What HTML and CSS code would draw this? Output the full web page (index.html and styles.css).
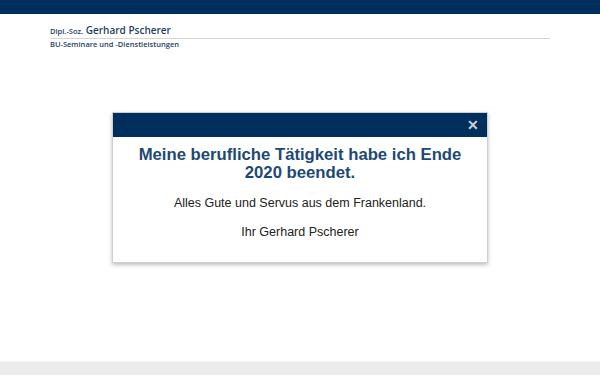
FILE: index.html
```html
<!DOCTYPE html>
<html lang="de">
<head>
  <meta charset="UTF-8"/>
  <meta name="viewport" content="width=device-width,initial-scale=1.0"/>
  <title>Gerhard Pscherer</title>
  <link rel="stylesheet" href="styles.css">
</head>
<body>

<div class="topbar"></div>

<header class="brand">
  <div class="brand-name"><small>Dipl.-Soz.</small> Gerhard Pscherer</div>
  <div class="brand-sub">BU-Seminare und -Dienstleistungen</div>
</header>

<main></main>

<footer></footer>

<!-- Popup -->
<div class="popup">
  <div class="popup-head"><span class="close">&#10005;</span></div>
  <div class="popup-body">
    <h2>Meine berufliche Tätigkeit habe ich Ende 2020 beendet.</h2>
    <p>Alles Gute und Servus aus dem Frankenland.</p>
    <p>Ihr Gerhard Pscherer</p>
  </div>
</div>

</body>
</html>
```

FILE: styles.css
```css
/* ========== Reset ========== */
* { margin:0; padding:0; box-sizing:border-box }
html, body { height:100% }
body {
  font-family: "Liberation Sans", Arial, sans-serif;
  background: #fff;
  color: #222;
  display: flex;
  flex-direction: column;
}

/* ========== Header ========== */
.topbar { height:14px; background:#002f5d; flex-shrink:0 }
.brand {
  margin: 10px 50px 0;
  font-family: "Open Sans", sans-serif;
  color: #1e3f63;
}
.brand-name {
  font-size: 10px;
  font-weight: 600;
  line-height: 12px;
  padding-bottom: 1px;
  border-bottom: 1px solid #d6d6d6;
}
.brand-name small { font-size: 7.5px }
.brand-sub {
  font-size: 7.5px;
  font-weight: 600;
  line-height: 10px;
}

main { flex:1 }
footer { height:14px; background:#ececec; border-top:1px solid #f4f4f4 }

/* ========== Popup ========== */
.popup {
  position: absolute;
  top: 112px;
  left: 112px;
  width: 376px;
  background: #fff;
  border: 1px solid #cfcfcf;
  box-shadow: 0 2px 4px rgba(0,0,0,0.25);
}
.popup-head {
  height: 24px;
  background: #002f5d;
  display: flex;
  justify-content: flex-end;
  align-items: center;
  padding-right: 8px;
}
.close {
  color: #c9d2dc;
  font-size: 14px;
  font-weight: bold;
  line-height: 1;
}
.popup-body {
  text-align: center;
  padding: 9px 12px 22px;
}
.popup-body h2 {
  font-size: 16.7px;
  line-height: 18px;
  color: #1d4973;
  font-weight: bold;
  margin-bottom: 14px;
}
.popup-body p {
  font-size: 12.5px;
  line-height: 15px;
  margin-bottom: 14px;
}
.popup-body p:last-child { margin-bottom:0 }
```
